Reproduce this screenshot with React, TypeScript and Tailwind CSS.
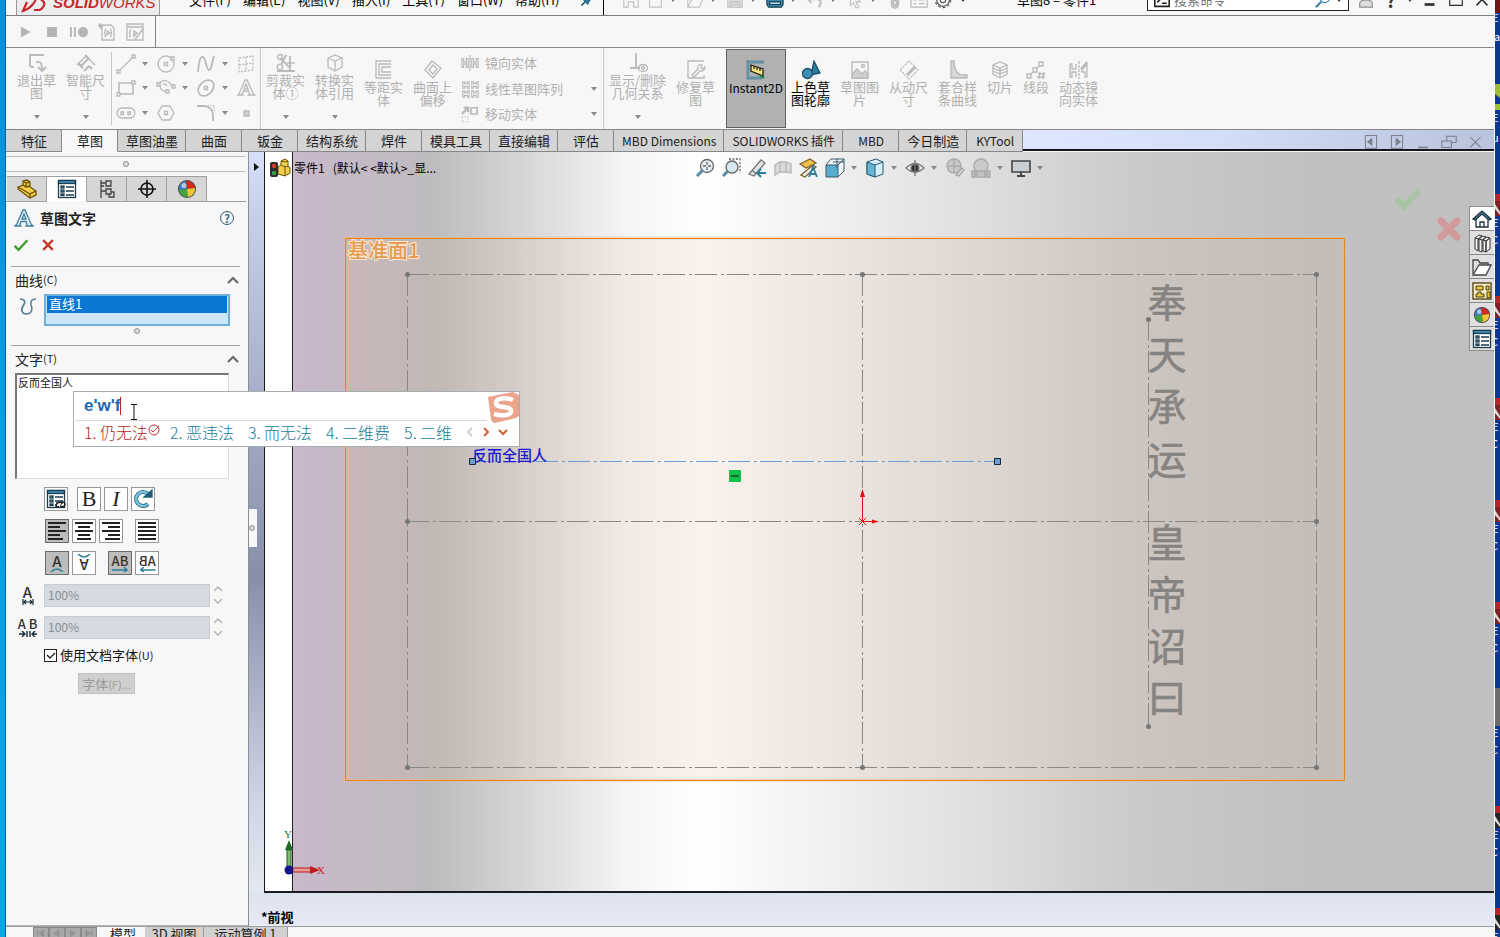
import React, { useState } from 'react'

type IconProps = { size?: string; stroke?: string; children: React.ReactNode }

const Icon: React.FC<IconProps> = ({ size = 'size-5', stroke = '#b9b9b9', children }) => (
  <svg viewBox="0 0 20 20" className={`${size} shrink-0`} fill="none" stroke={stroke} strokeWidth="1.3" aria-hidden="true">
    {children}
  </svg>
)

const Arrow: React.FC<{ className?: string }> = ({ className = 'text-[#8a8a8a]' }) => (
  <svg viewBox="0 0 6 4" className={`h-1 w-1.5 shrink-0 ${className}`} aria-hidden="true">
    <path d="M0 0h6L3 4z" fill="currentColor" />
  </svg>
)

const Chevron = () => (
  <svg viewBox="0 0 12 8" className="h-2 w-3" fill="none" stroke="#666" strokeWidth="2" aria-hidden="true">
    <path d="M1 7l5-5 5 5" />
  </svg>
)

const Dot = () => <span className="block size-1.5 rounded-full border border-[#909090] bg-[#dcdcdc]" />

const Sphere: React.FC<{ size?: string }> = ({ size = 'size-5' }) => (
  <Icon size={size} stroke="none">
    <circle cx="10" cy="10" r="9" fill="#444" />
    <path d="M10 10L9 2a8 8 0 0 0-7 9z" fill="#3f7fc4" />
    <path d="M10 10L9 2a8 8 0 0 1 9 7z" fill="#d42a1e" />
    <path d="M10 10L2 11a8 8 0 0 0 9 7z" fill="#45a33c" />
    <path d="M10 10l8-1a8 8 0 0 1-7 9z" fill="#f0c736" />
    <circle cx="7" cy="6.500" r="2.500" fill="#fff" opacity=".6" />
  </Icon>
)

const ListIcon: React.FC<{ size?: string; linked?: boolean }> = ({ size = 'size-5', linked }) => (
  <Icon size={size} stroke="#1d3d4f">
    <rect x="1.500" y="1.500" width="17" height="17" fill="#fff" />
    <rect x="1.500" y="1.500" width="17" height="3" fill="#3d8fb5" />
    <rect x="4" y="7" width="3" height="2" fill="#58b5d8" />
    <rect x="4" y="11" width="3" height="2" fill="#58b5d8" />
    <rect x="4" y="15" width="3" height="1.500" fill="#58b5d8" />
    <path d="M9 8h8M9 12h8M9 16h8" />
    {linked && <path d="M13 18l-3-1 1-3 4-1 1 2M14 17l4 1 1-3-1-2-3 1" fill="#fff" stroke="#222" strokeWidth="1.600" />}
  </Icon>
)

const PartIcon: React.FC<{ size?: string }> = ({ size = 'size-5' }) => (
  <Icon size={size} stroke="#6b5200">
    <path d="M1 8l5-2V2l4-1 3 2v5l6 4v4l-6 3L1 10z" fill="#f3cd4b" />
    <path d="M6 6l3 2 4-1M6 2l3 2 4-1M9 4v4M13 19v-4l6-3M13 15L1 8" />
  </Icon>
)

const icons = {
  exit: <><path d="M7 14H5a2 2 0 0 1-2-2V2h14" strokeWidth="1.800" /><path d="M9 9c5-1 6 1 6 9M11 14l4 4 4-4" strokeWidth="1.800" /></>,
  smart: <><path d="M1 12l9-9 9 9" /><path d="M4 14l9-9M8 18l5-5M2 10l5 5M9 2l4 4M13 13l3 3" strokeWidth="2.200" /></>,
  line: <><path d="M3 17L17 3" /><path d="M1 16h3v3H1zM16 1h3v3h-3z" fill="#f7f7f7" /></>,
  rect: <><path d="M3 5h14v11H3z" strokeWidth="1.600" /><path d="M1 15h3v3H1zM16 3h3v3h-3z" fill="#f7f7f7" /></>,
  slot: <><rect x="1" y="5" width="18" height="10" rx="5" /><path d="M5 9h2.500v2.500H5zM12 9h2.500v2.500H12z" /></>,
  circle: <><circle cx="10" cy="10" r="8" /><path d="M8.500 8.500h3v3h-3zM15 3h3v3h-3z" fill="#f7f7f7" /></>,
  arc: <><path d="M3 6c3-5 9-5 14 3M4 7c0 5 3 7 7 6M11 8a4 4 0 0 0-4-2" /><path d="M1 5h3v3H1zM16 7h3v3h-3zM10 12h3v3h-3z" fill="#f7f7f7" /></>,
  polygon: <><path d="M6 3h8l4 7-4 7H6l-4-7z" /><path d="M8.500 8.500h3v3h-3z" /></>,
  spline: <path d="M2 18C3 8 4 2 7 3c3 1 3 13 6 13 3 0 3-9 5-14" strokeWidth="1.800" />,
  ellipse: <><ellipse cx="10" cy="10" rx="9" ry="6.500" transform="rotate(-45 10 10)" strokeWidth="1.600" /><path d="M8.500 8.500h3v3h-3z" /></>,
  fillet: <><path d="M1 3h7a9 9 0 0 1 9 9v6" strokeWidth="1.800" /><path d="M12 3h6v5" strokeDasharray="1 1.500" /></>,
  plane: <path d="M3 4l14-2v14L3 18zM10 3v14M3 11l14-2" strokeDasharray="2 1.500" />,
  letter: <path d="M2 17h5l-1-1 1.500-3h5l1 3-1 1h6l-1-1L11 2H9L3 16zM8 11l2-5 2 5z" />,
  point: <path d="M8 8h5v5H8z" fill="#cfcfcf" />,
  trim: <><path d="M4 5l9 9M10 2L5 12M1 18h18M14 3v15" strokeWidth="1.800" /><circle cx="4" cy="14" r="2.800" /><circle cx="4" cy="4" r="2.500" /><path d="M11 10h8" /></>,
  convert: <path d="M3 5l7-3 7 3v9l-7 4-7-4zM3 5l7 3 7-3M10 8v10" />,
  offset: <><path d="M17 1H2v17h15M17 4H5v11h12" /><path d="M17 7H8v5h9" /></>,
  surface: <path d="M9 1l9 7-8 10-8-8zM10 5l4 4-4 5-4-4z" />,
  mirror: <><path d="M10 1v18" /><path d="M1 5h2v4h3V5h2v10H6v-4H3v4H1zM12 5h2v4h3V5h2v10h-2v-4h-3v4h-2z" /></>,
  pattern: <path d="M2 2h2v2h3V2h2v7H7V7H4v2H2zM12 2h2v2h3V2h2v7h-2V7h-3v2h-2zM2 12h2v2h3v-2h2v7H7v-2H4v2H2zM12 12h2v2h3v-2h2v7h-2v-2h-3v2h-2z" />,
  move: <><path d="M11 3h7v7h-7z" strokeWidth="1.800" /><path d="M1 10l6-6M3 3h5v5" strokeWidth="2.500" /><path d="M1 13h7v6H1z" strokeDasharray="1 2" /></>,
  relation: <><path d="M8 0v14M2 15h10" strokeWidth="1.800" /><ellipse cx="15" cy="15" rx="4.500" ry="3.500" /><circle cx="15" cy="15" r="1.500" /></>,
  repair: <><path d="M18 1H2v17h16v-3" /><path d="M6 15l6-6a3 3 0 0 1 4-4l-1 3 2 1 2-2a4 4 0 0 1-5 4l-6 6z" /></>,
  picture: <><path d="M2 2h16v16H2z" /><path d="M2 14l5-5 5 5 3-3 3 3v4H2z" fill="#d0d0d0" /><circle cx="13" cy="6" r="1.500" /></>,
  driven: <><path d="M10 1l9 9-9 9-9-9z" strokeDasharray="2 1" /><path d="M8 15l8-8" strokeWidth="3" /></>,
  fit: <path d="M3 1v17h16v-3h-3C9 15 6 9 6 1z" fill="#d6d6d6" />,
  slice: <path d="M3 5l7-3 7 3v9l-7 4-7-4zM3 5l7 3 7-3M3 8l7 3 7-3M3 11l7 3 7-3M10 8v10" />,
  segment: <><path d="M1 14h4v4H1zM7 8h4v4H7zM13 2h4v4h-4zM5 14l2-2M11 8l2-2" /><path d="M14 12l-1 7M18 12l-1 7M12 14h7M11 17h8" /></>,
  dynMirror: <><path d="M10 1v18" strokeDasharray="3 1" /><path d="M1 4h2v5h4V4M1 4v13h2v-5h4v5M13 10l5-6v13h-2v-5h-3z" /><path d="M12 9l6-7" strokeWidth="2" /></>,
}

type Tool = { lines: string[]; icon: keyof typeof icons; arrow?: boolean; width?: string }

const RibbonTool: React.FC<{ tool: Tool }> = ({ tool }) => (
  <button
    type="button"
    disabled
    className={`flex shrink-0 flex-col items-center text-[13px] leading-[13px] text-[#b0b0b0] ${tool.width || 'w-[49px]'} ${tool.arrow ? 'pt-[5px]' : 'pt-3'}`}
  >
    <Icon>{icons[tool.icon]}</Icon>
    <span className="whitespace-nowrap">
      {tool.lines.map((line) => <span key={line} className="block">{line}</span>)}
    </span>
    {tool.arrow && <Arrow className="mt-auto mb-2.5 text-[#8a8a8a]" />}
  </button>
)

const startTools: Tool[] = [
  { lines: ['退出草', '图'], icon: 'exit', arrow: true },
  { lines: ['智能尺', '寸'], icon: 'smart', arrow: true },
]
const editTools: Tool[] = [
  { lines: ['剪裁实', '体①'], icon: 'trim', arrow: true },
  { lines: ['转换实', '体引用'], icon: 'convert', arrow: true },
  { lines: ['等距实', '体'], icon: 'offset' },
  { lines: ['曲面上', '偏移'], icon: 'surface' },
]
const relationTools: Tool[] = [
  { lines: ['显示/删除', '几何关系'], icon: 'relation', arrow: true, width: 'w-[67px]' },
  { lines: ['修复草', '图'], icon: 'repair' },
]
const moreTools: Tool[] = [
  { lines: ['草图图', '片'], icon: 'picture' },
  { lines: ['从动尺', '寸'], icon: 'driven' },
  { lines: ['套合样', '条曲线'], icon: 'fit' },
  { lines: ['切片'], icon: 'slice', width: 'w-9' },
  { lines: ['线段'], icon: 'segment', width: 'w-9' },
  { lines: ['动态镜', '向实体'], icon: 'dynMirror' },
]
const sketchGrid: { icon: keyof typeof icons; arrow: boolean; label: string }[] = [
  { icon: 'line', arrow: true, label: '直线' },
  { icon: 'circle', arrow: true, label: '圆' },
  { icon: 'spline', arrow: true, label: '样条曲线' },
  { icon: 'plane', arrow: false, label: '基准面' },
  { icon: 'rect', arrow: true, label: '矩形' },
  { icon: 'arc', arrow: true, label: '圆弧' },
  { icon: 'ellipse', arrow: true, label: '椭圆' },
  { icon: 'letter', arrow: false, label: '文字' },
  { icon: 'slot', arrow: true, label: '槽口' },
  { icon: 'polygon', arrow: false, label: '多边形' },
  { icon: 'fillet', arrow: true, label: '圆角' },
  { icon: 'point', arrow: false, label: '点' },
]
const rowTools: { icon: keyof typeof icons; label: string; arrow: boolean }[] = [
  { icon: 'mirror', label: '镜向实体', arrow: false },
  { icon: 'pattern', label: '线性草图阵列', arrow: true },
  { icon: 'move', label: '移动实体', arrow: true },
]

const menus = ['文件(F)', '编辑(E)', '视图(V)', '插入(I)', '工具(T)', '窗口(W)', '帮助(H)']

const quickTools = [
  { label: '主页', arrow: false, art: <path d="M2 9l8-7 8 7v9h-5v-6H7v6H2z" /> },
  { label: '新建', arrow: true, art: <path d="M4 2h9l4 4v12H4z" /> },
  { label: '打开', arrow: true, art: <path d="M2 18V4h6l2 2h8v2M2 18L7 8h12l-4 10z" /> },
  { label: '保存', arrow: true, art: <><path d="M2 2h14l2 2v14H2z" fill="#ddd" /><path d="M5 18v-6h10v6M6 15h8" /></> },
  { label: '打印', arrow: true, art: <g stroke="#163f52"><path d="M5 9V2h10v7" fill="#fff" /><path d="M1 9h18v6l-2 3H3l-2-3z" fill="#3d88a8" /><path d="M4 12h12v3H4z" fill="#bfe4f2" /></g> },
  { label: '撤销', arrow: true, art: <path d="M2 9h11c4 0 4 6 1 9M6 4L2 9l4 4" strokeWidth="2.500" /> },
  { label: '选择', arrow: true, art: <path d="M5 1l11 11H11l3 6-3 1-3-6-3 3z" /> },
]

const TitleBar = () => (
  <header className="h-4 shrink-0 overflow-hidden border-b border-[#7b7d7f]">
    <div className="-mt-4 flex h-8 items-center text-[13px] text-black">
      <div className="flex h-full w-[598px] shrink-0 items-center border-r border-b border-black pl-2.5">
        <div className="flex h-full w-36 shrink-0 items-center gap-1 border-x border-[#9a9a9a] bg-[#ececec] pt-1.5 pl-1 text-[#c5282c]">
          <svg viewBox="0 0 28 20" className="h-5 w-7 shrink-0" fill="none" stroke="#c5282c" strokeWidth="2.200" aria-hidden="true">
            <path d="M6 3h6c4 0 3 5 0 8-3 4-7 6-10 7l4-9M26 2h-4c-4 1-3 4 0 6 3 3 0 8-4 9h-5" />
          </svg>
          <span className="text-[15px] leading-5 italic [font-family:'Liberation_Sans',sans-serif]">
            <b>SOLID</b>WORKS
          </span>
        </div>
        <nav className="flex flex-1 items-center gap-3 pr-2 pl-[29px]">
          {menus.map((item) => (
            <button key={item} type="button" className="whitespace-nowrap">{item}</button>
          ))}
          <Icon size="ml-auto size-4" stroke="#22607c">
            <path d="M3 17l5-5" strokeWidth="2" />
            <path d="M5 9l6 6 2-4 5-5-4-4-5 5z" fill="#2c7ea1" />
          </Icon>
        </nav>
      </div>
      <div className="flex shrink-0 items-center gap-1.5 pl-[18px]">
        {quickTools.map((t) => (
          <button key={t.label} type="button" aria-label={t.label} className="flex items-center gap-1.5">
            <Icon size="size-[18px]" stroke="#c2c2c2">{t.art}</Icon>
            {t.arrow && <Arrow className="mr-1 text-[#777]" />}
          </button>
        ))}
        <button type="button" aria-label="重建模型">
          <Icon size="size-[18px]"><rect x="6" y="0" width="8" height="19" rx="4" fill="#c4c4c4" /><circle cx="10" cy="13" r="2" fill="#eee" /></Icon>
        </button>
        <button type="button" aria-label="文件属性">
          <Icon size="size-[18px]"><path d="M1 2h18v16H1zM1 6h18M4 10h3M4 14h3M10 10h6M10 14h6" /></Icon>
        </button>
        <button type="button" aria-label="选项" className="flex items-center gap-2">
          <Icon size="size-[18px]" stroke="#555"><circle cx="10" cy="10" r="8.500" strokeDasharray="3 2.300" /><circle cx="10" cy="10" r="7" /><circle cx="10" cy="10" r="3" /></Icon>
          <Arrow className="text-[#333]" />
        </button>
      </div>
      <div className="flex-1 text-center">草图8 – 零件1</div>
      <label className="flex h-[22px] w-[202px] shrink-0 items-center border border-[#222] bg-white px-1.5">
        <Icon size="size-4" stroke="#222"><path d="M1 1h18v17H1z" strokeWidth="2" /><path d="M4 6l4 3-4 4M10 14h6" strokeWidth="2" /></Icon>
        <input aria-label="搜索命令" placeholder="搜索命令" className="ml-1 w-full min-w-0 bg-transparent placeholder:text-[#777] focus:outline-none" />
        <Icon size="size-[18px]" stroke="#3f85ad"><circle cx="12" cy="8" r="5" /><path d="M8 12l-6 6" strokeWidth="2.500" /></Icon>
        <Arrow className="ml-1 text-[#333]" />
      </label>
      <div className="flex shrink-0 items-center gap-2 pr-[3px] pl-2 text-[#333]">
        <Icon size="size-[18px]" stroke="#8d8d8d"><circle cx="10" cy="5" r="4" /><path d="M3 18v-4q0-4 7-4t7 4v4z" fill="#ddd" /></Icon>
        <button type="button" className="w-4 text-lg font-bold" aria-label="帮助">?</button>
        <Arrow className="text-[#444]" />
        <button type="button" aria-label="最小化"><Icon size="size-[18px]" stroke="#333"><path d="M4 15h11" strokeWidth="3" /></Icon></button>
        <button type="button" aria-label="最大化"><Icon size="size-[18px]" stroke="#333"><path d="M3 4h14v12H3z" /></Icon></button>
        <button type="button" aria-label="关闭"><Icon size="size-[18px]" stroke="#333"><path d="M4 3l12 13M16 3L4 16" strokeWidth="1.800" /></Icon></button>
      </div>
    </div>
  </header>
)

const MacroBar = () => (
  <div className="flex h-8 shrink-0 border-b border-[#85878a]">
    <div className="flex w-[150px] items-center gap-2 border-r border-[#85878a] pl-[11px]">
      <button type="button" aria-label="运行宏"><Icon size="size-[18px]"><path d="M5 5l9 5-9 5z" fill="#b5b5b5" /></Icon></button>
      <button type="button" aria-label="停止宏"><Icon size="size-[18px]"><path d="M5 5h10v10H5z" fill="#b5b5b5" /></Icon></button>
      <button type="button" aria-label="录制宏"><Icon size="size-[20px]"><path d="M2 5v10M6 5v10" strokeWidth="2" /><circle cx="14" cy="10" r="4.500" fill="#b5b5b5" /></Icon></button>
      <button type="button" aria-label="新建宏"><Icon><path d="M5 3h9l3 3v12H5zM9 7c-2 0 0 4-2 4 2 0 0 4 2 4M13 7c2 0 0 4 2 4-2 0 0 4-2 4M10 9l3 2-3 2z" /><path d="M1 4h5M3.500 1v6M2 2l3 4" /></Icon></button>
      <button type="button" aria-label="编辑宏"><Icon><path d="M2 2h16v16H2zM2 5h16" /><path d="M6 8c-2 0 0 3-2 3 2 0 0 4 2 4M9 9l3 2-3 3zM18 7l-6 8-2 2" strokeWidth="1.500" /></Icon></button>
    </div>
  </div>
)

const Ribbon = () => (
  <div className="flex h-[82px] shrink-0 border-b border-[#85878a] pl-1.5">
    <div className="flex pr-px">{startTools.map((t) => <RibbonTool key={t.icon} tool={t} />)}</div>
    <div className="my-1 grid grid-cols-[40px_40px_40px_24px] grid-rows-3 border-l border-[#c6c6c6] pl-1">
      {sketchGrid.map((t) => (
        <button key={t.icon} type="button" disabled aria-label={t.label} className="flex items-center gap-1.5">
          <Icon>{icons[t.icon]}</Icon>
          {t.arrow && <Arrow />}
        </button>
      ))}
    </div>
    <div className="flex border-l border-[#c6c6c6]">{editTools.map((t) => <RibbonTool key={t.icon} tool={t} />)}</div>
    <div className="flex w-[146px] flex-col py-0.5 pl-1 text-[13px] text-[#b0b0b0]">
      {rowTools.map((t) => (
        <button key={t.icon} type="button" disabled className="flex flex-1 items-center gap-1.5 pr-1.5">
          <Icon size="size-[18px]">{icons[t.icon]}</Icon>
          <span>{t.label}</span>
          {t.arrow && <Arrow className="ml-auto text-[#8a8a8a]" />}
        </button>
      ))}
    </div>
    <div className="flex w-[123px] border-l border-[#c6c6c6]">{relationTools.map((t) => <RibbonTool key={t.icon} tool={t} />)}</div>
    <button type="button" className="my-px flex w-[60px] shrink-0 flex-col items-center border border-[#5f5f5f] bg-[#b1b1b1] pt-2.5 text-xs leading-[15px] text-black">
      <Icon stroke="#1d5f7c">
        <path d="M18 2H2v16h14" strokeWidth="2.400" />
        <path d="M18 2H2v16h14" stroke="#bfe4f2" strokeWidth=".8" />
        <path d="M5 5l12 4v7L5 11z" fill="#f7e37a" stroke="#222" />
        <path d="M8 6v3M11 7v3M14 8v3" stroke="#222" />
        <path d="M14 15l4 3" stroke="#1d7a3a" strokeWidth="2" />
      </Icon>
      Instant2D
    </button>
    <button type="button" className="flex w-[49px] shrink-0 flex-col items-center pt-3 text-[13px] leading-[13px] text-black">
      <Icon stroke="#1d4f6c">
        <path d="M13 1l6 12-9 2z" fill="#2c7ea1" />
        <circle cx="6.500" cy="13.500" r="5" fill="#3d8fb5" />
      </Icon>
      <span className="whitespace-nowrap">上色草</span>
      <span className="whitespace-nowrap">图轮廓</span>
    </button>
    {moreTools.map((t) => <RibbonTool key={t.icon} tool={t} />)}
  </div>
)

const tabs = [
  { name: '特征' },
  { name: '草图' },
  { name: '草图油墨' },
  { name: '曲面' },
  { name: '钣金' },
  { name: '结构系统' },
  { name: '焊件' },
  { name: '模具工具' },
  { name: '直接编辑' },
  { name: '评估' },
  { name: 'MBD Dimensions', latin: true },
  { name: 'SOLIDWORKS 插件', latin: true },
  { name: 'MBD', latin: true },
  { name: '今日制造' },
  { name: 'KYTool', latin: true },
]

const CommandTabs: React.FC<{ active: string; onSelect: (tab: string) => void }> = ({ active, onSelect }) => (
  <div className="flex h-[22px] shrink-0 text-[#1c1c1c]">
    {tabs.map((tab) => (
      <button
        key={tab.name}
        type="button"
        onClick={() => onSelect(tab.name)}
        className={`min-w-14 shrink-0 border-r border-b border-[#85878a] pr-[7px] pl-2 whitespace-nowrap ${tab.latin ? 'text-xs leading-5' : 'text-[13px] leading-5'} ${tab.name === active ? 'border-b-[#f7f7f7] bg-[#f7f7f7]' : 'bg-[#d4d4d4]'}`}
      >
        {tab.name}
      </button>
    ))}
    <div className="flex h-[21px] flex-1 items-end justify-end gap-2.5 border-b-2 border-[#15161c] bg-[linear-gradient(to_right,#dfe7ff,#d3def7_40%,#b9c4dc)] pr-[11px]">
      <button type="button" aria-label="左窗格"><Icon size="size-4" stroke="#7a7f8a"><path d="M3 3h14v16H3z" /><path d="M11 7v8l-5-4z" fill="#7a7f8a" /></Icon></button>
      <button type="button" aria-label="右窗格"><Icon size="size-4" stroke="#7a7f8a"><path d="M3 3h14v16H3z" /><path d="M9 7v8l5-4z" fill="#7a7f8a" /></Icon></button>
      <button type="button" aria-label="最小化文档"><Icon size="size-4" stroke="#7a7f8a"><path d="M4 18h12" strokeWidth="2" /></Icon></button>
      <button type="button" aria-label="还原文档"><Icon size="size-4" stroke="#7a7f8a"><path d="M1 10h12v8H1zM7 10V4h12v8h-6" /></Icon></button>
      <button type="button" aria-label="关闭文档"><Icon size="size-4" stroke="#7a7f8a"><path d="M4 5l13 13M17 5L4 18" /></Icon></button>
    </div>
  </div>
)

const FormatButton: React.FC<{ label: string; on?: boolean; gap?: boolean; children: React.ReactNode }> = ({ label, on, gap, children }) => (
  <button
    type="button"
    aria-label={label}
    aria-pressed={!!on}
    className={`flex size-6 items-center justify-center border ${on ? 'border-[#6c6c6c] bg-[#bdbdbd]' : 'border-[#979797] bg-white'} ${gap ? 'ml-[9px]' : ''}`}
  >
    {children}
  </button>
)

const panelTabs = [
  { label: '特征树', art: <PartIcon /> },
  { label: '属性', art: <ListIcon /> },
  { label: '配置', art: <Icon stroke="#444"><path d="M4 1v18M4 4h5M4 12h5M9 2h5v5H9zM9 10h5v5H9zM14 13h3v5h-5v-3M4 7h3" /></Icon> },
  { label: '尺寸', art: <Icon stroke="#111"><circle cx="10" cy="10" r="6" strokeWidth="1.600" /><path d="M10 1v18M1 10h18" strokeWidth="1.600" /></Icon> },
  { label: '外观', art: <Sphere /> },
]

const GroupTitle: React.FC<{ name: string; hint: string }> = ({ name, hint }) => (
  <button type="button" className="flex h-7 w-full items-center border-t border-[#a4a4a4] pr-px pb-0.5 pl-1 text-sm text-[#222]">
    {name}<span className="text-[11px]">{hint}</span>
    <span className="ml-auto"><Chevron /></span>
  </button>
)

const Spinner: React.FC<{ label: string; children: React.ReactNode }> = ({ label, children }) => (
  <div className="flex h-8 items-center">
    <span className="flex w-[33px] shrink-0 justify-center">{children}</span>
    <input
      aria-label={label}
      disabled
      defaultValue="100%"
      className="h-[23px] w-[166px] border border-[#c9ccd0] bg-[#d5d9e0] px-[3px] pb-0.5 text-xs text-[#8a8d92]"
    />
    <svg viewBox="0 0 10 20" className="ml-[3px] h-5 w-2.5" fill="none" stroke="#b5b5b5" strokeWidth="1.500" aria-hidden="true">
      <path d="M1 6l4-4 4 4M1 14l4 4 4-4" />
    </svg>
  </div>
)

const PropertyPanel = () => {
  const [text, setText] = useState('反而全国人')
  const [docFont, setDocFont] = useState(true)

  return (
    <aside className="flex w-[243px] shrink-0 flex-col border-r border-[#8b8f96] pt-1">
      <div className="mr-0.5 flex h-4 shrink-0 items-center justify-center border-y border-[#bcbcbc]"><Dot /></div>
      <div className="mt-1 mr-0.5 flex h-[26px] shrink-0 border-b border-[#a0a0a0] pl-px">
        {panelTabs.map((t, i) => (
          <button
            key={t.label}
            type="button"
            aria-label={t.label}
            className={`flex h-[26px] w-10 items-center justify-center border border-l-0 border-[#a0a0a0] ${i === 1 ? 'border-b-[#f7f7f7] bg-white' : 'bg-[#d6d6d6]'}`}
          >
            {t.art}
          </button>
        ))}
      </div>
      <div className="flex h-8 shrink-0 items-center pr-3.5 pl-2">
        <Icon stroke="#3d7d9c"><path d="M1 18h6l-1-1.500 1-3h5l1 3-1 1.500h7l-2-2L11 2H9L3 16zM8 11l2-5 2 5z" fill="#eaf5fa" /></Icon>
        <h2 className="ml-1.5 text-sm font-bold text-[#222]">草图文字</h2>
        <button type="button" aria-label="帮助" className="ml-auto flex size-3.5 items-center justify-center rounded-full border border-[#33536b] text-[11px] leading-none font-bold text-[#2b6c93]">?</button>
      </div>
      <div className="flex h-8 shrink-0 items-start gap-[11px] pt-[3px] pl-[7px]">
        <button type="button" aria-label="确定"><Icon size="size-4" stroke="#3f9a32"><path d="M2 11l5 5L18 4" strokeWidth="3" /></Icon></button>
        <button type="button" aria-label="取消"><Icon size="size-4" stroke="#c0392b"><path d="M4 4l12 12M16 4L4 16" strokeWidth="3" /></Icon></button>
      </div>

      <div className="mr-2 ml-[5px] flex flex-col">
        <GroupTitle name="曲线" hint="(C)" />
        <div className="flex items-start">
          <div className="flex w-[33px] shrink-0 justify-center pt-0.5">
            <Icon stroke="#4f7f96"><path d="M2 3c5 0 6 3 3 7-3 5 0 8 3 8 6 0 7-5 5-9-1-4 1-6 5-6" strokeWidth="1.600" /></Icon>
          </div>
          <ul aria-label="曲线" className="h-8 w-[186px] border-2 border-[#6fb0d8] bg-[#cce5f9]">
            <li className="mx-px h-[17px] bg-[#0a78d2] pl-0.5 text-[13px] leading-4 text-white">直线1</li>
          </ul>
        </div>
        <div className="flex h-[19px] items-start justify-center pt-0.5 pl-[22px]"><Dot /></div>
        <GroupTitle name="文字" hint="(T)" />
        <textarea
          aria-label="文字"
          value={text}
          onChange={(e) => setText(e.target.value)}
          className="ml-1 h-[106px] w-[214px] resize-none border border-t-2 border-l-2 border-[#dcdcdc] border-t-[#777] border-l-[#777] bg-white px-px text-[11px] leading-[15px] text-[#222] focus:outline-none"
        />

        <div className="ml-[33px] flex h-8 items-center gap-[3px] pt-2">
          <FormatButton label="链接到属性"><ListIcon linked /></FormatButton>
          <span className="w-[3px]" />
          <FormatButton label="加粗"><span className="text-[22px] leading-5 text-[#222] [font-family:'Liberation_Serif',serif]">B</span></FormatButton>
          <FormatButton label="斜体"><span className="text-[22px] leading-5 text-[#222] italic [font-family:'Liberation_Serif',serif]">I</span></FormatButton>
          <FormatButton label="旋转">
            <Icon stroke="#235e78"><path d="M15 15a7 7 0 1 1 0-10" strokeWidth="4" /><path d="M15 15a7 7 0 1 1 0-10" stroke="#7cc3dc" strokeWidth="2.400" /><path d="M11 8h8V1z" fill="#235e78" /></Icon>
          </FormatButton>
        </div>
        <div className="ml-[34px] flex h-8 items-center gap-[3px] pt-2">
          <FormatButton label="左对齐" on><Icon stroke="#222"><path d="M1 2h18M1 6h12M1 10h18M1 14h12M1 18h15" strokeWidth="2" /></Icon></FormatButton>
          <FormatButton label="居中"><Icon stroke="#222"><path d="M1 2h18M4 6h12M1 10h18M4 14h12M3 18h14" strokeWidth="2" /></Icon></FormatButton>
          <FormatButton label="右对齐"><Icon stroke="#222"><path d="M1 2h18M7 6h12M1 10h18M7 14h12M4 18h15" strokeWidth="2" /></Icon></FormatButton>
          <FormatButton label="两端对齐" gap><Icon stroke="#222"><path d="M1 2h18M1 6h18M1 10h18M1 14h18M1 18h18" strokeWidth="2" /></Icon></FormatButton>
        </div>
        <div className="ml-[34px] flex h-8 items-center gap-[3px] pt-2">
          <FormatButton label="竖直正向" on>
            <span className="flex flex-col items-center text-[15px] leading-[13px] font-medium text-[#333]">A
              <svg viewBox="0 0 14 5" className="h-[5px] w-3.5" fill="none" stroke="#2d7f9f" strokeWidth="1.600"><path d="M1 5q6-6 12 0" /></svg>
            </span>
          </FormatButton>
          <FormatButton label="竖直反转">
            <span className="flex rotate-180 flex-col items-center text-[15px] leading-[13px] font-medium text-[#333]">A
              <svg viewBox="0 0 14 5" className="h-[5px] w-3.5" fill="none" stroke="#2d7f9f" strokeWidth="1.600"><path d="M1 5q6-6 12 0" /></svg>
            </span>
          </FormatButton>
          <FormatButton label="水平正向" on gap>
            <span className="flex flex-col items-center text-[13px] leading-[13px] font-medium text-[#333]">AB
              <svg viewBox="0 0 16 5" className="h-[5px] w-4" fill="none" stroke="#2d7f9f" strokeWidth="1.500"><path d="M0 3h15M12 0l3 3-3 2" /></svg>
            </span>
          </FormatButton>
          <FormatButton label="水平反转">
            <span className="flex -scale-x-100 flex-col items-center text-[13px] leading-[13px] font-medium text-[#333]">AB
              <svg viewBox="0 0 16 5" className="h-[5px] w-4" fill="none" stroke="#2d7f9f" strokeWidth="1.500"><path d="M0 3h15M12 0l3 3-3 2" /></svg>
            </span>
          </FormatButton>
        </div>

        <div className="pt-1">
          <Spinner label="宽度因子">
            <span className="flex flex-col items-center text-[15px] leading-[14px] font-medium text-[#333]">A
              <svg viewBox="0 0 12 6" className="h-1.5 w-3" fill="none" stroke="#17303c" strokeWidth="1.200"><path d="M1 0v6M11 0v6M1 3h10M4 1L2 3l2 2M8 1l2 2-2 2" /></svg>
            </span>
          </Spinner>
          <Spinner label="间距">
            <span className="flex flex-col items-center text-[13px] leading-[14px] font-medium whitespace-nowrap text-[#333]">A B
              <svg viewBox="0 0 18 6" className="h-1.5 w-[18px]" fill="none" stroke="#17303c" strokeWidth="1.400"><path d="M0 3h6M3 0l3 3-3 3M8 0v6M11 0v6M18 3h-5M16 0l-3 3 3 3" /></svg>
            </span>
          </Spinner>
        </div>
        <label className="ml-[33px] flex h-6 items-center gap-[3px] text-[13px] text-[#111]">
          <span className="relative flex size-[13px]">
            <input type="checkbox" checked={docFont} onChange={(e) => setDocFont(e.target.checked)} className="size-[13px] appearance-none border border-[#222] bg-white" />
            {docFont && (
              <svg viewBox="0 0 13 13" className="pointer-events-none absolute inset-0" fill="none" stroke="#222" strokeWidth="1.400"><path d="M3 6l3 3 5-5" /></svg>
            )}
          </span>
          <span>使用文档字体<span className="text-[11px]">(U)</span></span>
        </label>
        <button type="button" disabled className="mt-1.5 ml-[67px] h-[21px] w-[57px] border border-[#c2c2c2] bg-[#cfcfcf] text-[13px] leading-[19px] text-[#9a9a9a]">
          字体<span className="text-[11px]">(F)...</span>
        </button>
      </div>
      <div className="mt-auto h-px bg-[#b5b5b5]" />
    </aside>
  )
}

const hud: { label: string; arrow?: boolean; art: React.ReactNode }[] = [
  { label: '整屏显示', art: <g stroke="#666"><circle cx="12" cy="8" r="6.500" fill="#e6eef2" /><path d="M8 12l-6 6" strokeWidth="3" stroke="#5b8ba3" /><path d="M12 4v3M12 9v3M8 8h3M13 8h3" /></g> },
  { label: '局部放大', art: <g stroke="#666"><path d="M8 1h11v14" strokeDasharray="2 1.500" /><circle cx="11" cy="9" r="6" fill="#d9e8ef" /><path d="M7 13l-5 5" strokeWidth="3" stroke="#5b8ba3" /></g> },
  { label: '上一视图', art: <g stroke="#777"><path d="M2 16L14 2l4 3L7 18z" fill="#e4e4e4" /><path d="M5 12l4 4" /><path d="M19 15h-8M14 11l-4 4 4 4" stroke="#2c7ea1" strokeWidth="2" /></g> },
  { label: '剖面视图', art: <g stroke="#b5b5b5"><path d="M2 7l5-3v10l-5 3zM7 4h6v10H7M13 4l5 2v9l-5-1" fill="#dadada" /></g> },
  { label: '动态注解视图', art: <g stroke="#7a6428"><path d="M1 6l10-5 6 4-10 5z" fill="#f0bf4c" /><path d="M2 17L14 7l3 2L6 19z" fill="#eee" /><path d="M10 19l4-10 4 10M11 16h6" stroke="#2c7ea1" strokeWidth="1.800" /></g> },
  { label: '视图定向', arrow: true, art: <g stroke="#3b5a68" strokeWidth="1"><path d="M6 1h13v12l-6 6" fill="#eef6fa" /><path d="M1 7h12v12H1z" fill="#5aacd0" /><path d="M1 7l5-6M13 7l6-6M13 19l6-6M12 1v9M8 4h11" /></g> },
  { label: '显示样式', arrow: true, art: <g stroke="#245873" strokeWidth="1"><path d="M2 4l9-3 7 3v12l-8 3-8-3z" fill="#d5edf7" /><path d="M2 4l8 3v12l-8-3z" fill="#69b4d3" /><path d="M10 7l8-3" /></g> },
  { label: '隐藏显示项目', arrow: true, art: <g stroke="#777"><path d="M1 10q9-9 18 0-9 8-18 0z" fill="#eee" /><circle cx="10" cy="10" r="4" fill="#333" /><path d="M10 2v16" /></g> },
  { label: '编辑外观', art: <g stroke="#aaa"><circle cx="9" cy="8" r="7" fill="#c9c9c9" /><path d="M9 1v14M2 8h14M11 17l6-7 2 2-5 6z" fill="#d6d6d6" /></g> },
  { label: '应用布景', arrow: true, art: <g stroke="#a9a9a9"><circle cx="10" cy="8" r="7" fill="#cacaca" /><path d="M1 19v-6h18v6z" fill="#c2c2c2" /><circle cx="5" cy="16" r="1.500" /><circle cx="15" cy="16" r="1.500" /></g> },
  { label: '视图设定', arrow: true, art: <g stroke="#444"><path d="M1 3h18v11H1z" fill="#c9cfd2" strokeWidth="1.600" /><path d="M10 14v4M6 18h8" strokeWidth="2" /></g> },
]

const taskPane = [
  { label: '资源', art: <Icon stroke="#1d2f38"><path d="M4 10v8h12v-8" fill="#fff" /><path d="M1 10l9-8 9 8-2 1-7-6-7 6z" fill="#3d8fa8" /><path d="M8 18v-5h4v5" /></Icon> },
  { label: '设计库', art: <Icon stroke="#333"><path d="M3 5l3 1v12l-3-2zM7 6l3 1v12l-3-1zM11 7l3 1v11l-3-1zM14 8l4-3v11l-4 3zM3 5l4-3 3 1-4 3M7 6l4-3 3 1-4 3M11 7l4-3 3 1-4 3" fill="#f2f2f2" strokeWidth="1" /></Icon> },
  { label: '文件探索器', art: <Icon stroke="#444"><path d="M1 17V3h5l2 3h8v3" fill="#ddd" /><path d="M1 18L7 8h12l-5 10z" fill="#fff" /></Icon> },
  { label: '视图调色板', art: <Icon stroke="#4a3c10"><rect x="1" y="2" width="18" height="16" fill="#f6eec5" /><path d="M4 5h7v4H4zM14 5h3v4h-3zM6 11h3v2h3v3H4v-3h2zM15 11h3v6h-3z" fill="#e8c643" strokeWidth="1" /></Icon> },
  { label: '外观布景', art: <Sphere size="size-[18px]" /> },
  { label: '自定义属性', art: <ListIcon /> },
]

const verse: [string, number][] = [['奉', 303], ['天', 355], ['承', 407], ['运', 460], ['皇', 543], ['帝', 595], ['诏', 647], ['曰', 698]]
const nodes = [[407, 274], [862, 274], [1316, 274], [407, 521], [1316, 521], [407, 767], [862, 767], [1316, 767], [1148, 319], [1148, 726]]

const SketchCanvas = () => (
  <svg viewBox="265 152 1229 739" className="absolute inset-0 size-full">
    <rect x="345" y="238" width="999" height="542" fill="#dfa882" fillOpacity=".15" stroke="#f0ba80" strokeOpacity=".5" strokeWidth="3" />
    <path d="M345.500 238.500h999v542h-999z" fill="none" stroke="#e58222" />
    <text x="348" y="258" fontSize="20" fontWeight="500" fill="#e59a50" stroke="#fbe9d4" strokeWidth="2" paintOrder="stroke">基准面1</text>
    <g fill="none" stroke="#8a8886" strokeDasharray="22 4 3 3">
      <path d="M407 274.500H1316M407 521.500H1316M407 767.500H1316M407.500 274V767M862.500 274V767M1316.500 274V767M1148.500 319V726" />
    </g>
    <path d="M472 461.500H997" stroke="#6d9fd3" strokeDasharray="22 4 3 3" />
    {nodes.map(([x, y]) => <circle key={`${x}-${y}`} cx={x + 0.5} cy={y + 0.5} r="2.500" fill="#777" />)}
    <g fontSize="39" fontWeight="400" fill="#868482" stroke="#868482" strokeWidth=".6" textAnchor="middle">
      {verse.map(([char, y]) => <text key={char} x="1167" y={y + 14}>{char}</text>)}
    </g>
    <text x="472" y="461" fontSize="15" fontWeight="500" fill="#1a1ad0">反而全国人</text>
    <path d="M469.500 458.500h6v6h-6zM994.500 458.500h6v6h-6z" fill="#6d9fd3" stroke="#15233a" />
    <rect x="729" y="470" width="12" height="12" fill="#12c24a" />
    <path d="M731 476h8" stroke="#0a4a1e" strokeWidth="1.500" />
    <g stroke="#e01010" fill="#e01010">
      <path d="M862.500 521V494M862 521.500H874M859 518l7 7M866 518l-7 7" fill="none" />
      <path d="M862.500 489l2.500 8h-5zM879 521.500l-7 2v-4z" stroke="none" />
    </g>
    {/* origin triad */}
    <path d="M287 869V850h4v19z" fill="#7dbd76" stroke="#1f5c22" />
    <path d="M289 840l4 10h-8z" fill="#1f6b26" />
    <path d="M290 868h21v4h-21z" fill="#ee9a94" stroke="#b01c1c" />
    <path d="M320 870l-10 4v-8z" fill="#c01c1c" />
    <circle cx="289" cy="870" r="4.500" fill="#16168c" />
    <g fontSize="11" className="[font-family:'Liberation_Serif',serif]">
      <text x="284" y="838" fill="#1f7a2a">Y</text>
      <text x="317" y="874" fill="#d62222">X</text>
    </g>
  </svg>
)

const Viewport = () => (
  <section className="relative flex min-w-0 flex-1 flex-col bg-[linear-gradient(to_bottom,#d5e0fa,#c5d0ea_8%,#939db8_45%,#8790ab_55%,#cfd5e5_84%,#e3e7f2_95%)] pl-[15px]">
    <button type="button" aria-label="展开设计树" className="absolute top-[9px] left-px flex size-3 items-center justify-center">
      <svg viewBox="0 0 5 8" className="h-2 w-[5px]"><path d="M0 0l5 4-5 4z" fill="#111" /></svg>
    </button>
    <div className="absolute top-[357px] left-0 flex h-[38px] w-2 items-center bg-[#f7f7f7]"><Dot /></div>
    <div className="relative flex-1 border-b-2 border-l border-[#1b1c22] bg-white pl-[27px]">
      <div className="size-full border-l border-[#222] bg-[linear-gradient(to_right,#c9b8cb,#bdbcbe_12%,#f6f6f6_28%,#ffffff_34%,#dcdcdc_59%,#cacaca_70%,#c1c1c1_84%,#c0c0c0)]" />
      <SketchCanvas />
      <div className="absolute inset-x-0 top-1 flex h-6 items-center">
        <div className="flex w-[35%] shrink-0 items-center pl-1 text-xs text-black">
          <svg viewBox="0 0 22 20" className="h-5 w-[22px] shrink-0" aria-hidden="true">
            <path d="M9 9l3-2V3l4-2 3 2v5l2 2v5l-5 3-7-2z" fill="#f3cd4b" stroke="#6b5200" />
            <path d="M12 7l4 2 3-1M12 3l4 1 3-1M16 9v9" fill="none" stroke="#6b5200" />
            <rect x="1" y="4" width="8" height="15" rx="2" fill="#2d2d2d" />
            <circle cx="5" cy="8" r="2.200" fill="#d83a2c" />
            <circle cx="5" cy="15" r="2.200" fill="#3a9d48" />
          </svg>
          <span className="ml-[3px] whitespace-pre">零件1   (默认&lt; &lt;默认&gt;_显...</span>
        </div>
        <div className="flex items-center gap-1.5">
          {hud.map((t) => (
            <button key={t.label} type="button" aria-label={t.label} className="flex items-center gap-1.5">
              <Icon>{t.art}</Icon>
              {t.arrow && <Arrow className="mr-0.5 text-[#8a8a8a]" />}
            </button>
          ))}
        </div>
      </div>
      <button type="button" aria-label="退出草图" className="absolute top-8 right-[72px]">
        <svg viewBox="0 0 30 30" className="size-[30px]"><path d="M2 17l4-4 6 5L25 5l4 4-17 18z" fill="#a9c4a4" /></svg>
      </button>
      <button type="button" aria-label="取消草图" className="absolute top-16 right-8">
        <svg viewBox="0 0 26 26" className="size-[26px]" fill="none" stroke="#d39a9b" strokeWidth="7" strokeLinecap="round"><path d="M5 5l16 16M21 5L5 21" /></svg>
      </button>
      <div className="absolute top-[54px] right-0 flex flex-col border-t border-l border-[#8b8b8b]">
        {taskPane.map((t, i) => (
          <button key={t.label} type="button" aria-label={t.label} className={`flex h-6 w-6 items-center justify-center border-b border-[#8b8b8b] ${i === 0 ? 'bg-white' : 'bg-[#e0e0e0]'}`}>
            {t.art}
          </button>
        ))}
      </div>
    </div>
    <div className="-ml-[15px] h-[33px] shrink-0 bg-[linear-gradient(to_bottom,#dde2ef,#e8ebf6)] pt-3.5 pl-3 text-[13px] leading-5 font-bold text-black">*前视</div>
  </section>
)

const candidates = ['仍无法', '恶违法', '而无法', '二维费', '二维']

const ImePopup = () => (
  <div className="absolute top-[239px] left-[67px] w-[447px] border border-[#a9adb2] bg-white">
    <div className="flex h-7 items-center pl-2.5 text-[17px] font-bold text-[#1c69b0] [font-family:'Liberation_Sans',sans-serif]">
      e'w'f<span className="h-[18px] w-px bg-[#c02020]" />
      <svg viewBox="0 0 10 16" className="mt-3 ml-2 h-4 w-2.5" fill="none" stroke="#111"><path d="M2 .500h6M5 0v16M2 15.500h6" /></svg>
    </div>
    <div className="mr-8 ml-px h-px bg-[#d5d8db]" />
    <ol className="flex h-[25px] items-center gap-3.5 pb-1 pl-2.5 text-base leading-6 font-light text-[#1a7d96]">
      {candidates.map((word, i) => (
        <li key={word + i} className={`flex items-center whitespace-nowrap ${i === 0 ? '-mr-1 text-[#b01f24]' : ''}`}>
          <span className="w-4">{i + 1}.</span>{word}
          {i === 0 && (
            <svg viewBox="0 0 12 12" className="mb-1 size-3" fill="none" stroke="#c0343a"><circle cx="6" cy="6" r="5" /><path d="M3 6l2 2 6-6" /></svg>
          )}
        </li>
      ))}
      <li className="flex items-center gap-2">
        <svg viewBox="0 0 8 10" className="h-2.5 w-2" fill="none" stroke="#cfcfcf" strokeWidth="2"><path d="M6 1L2 5l4 4" /></svg>
        <svg viewBox="0 0 8 10" className="h-2.5 w-2" fill="none" stroke="#d0622f" strokeWidth="2"><path d="M2 1l4 4-4 4" /></svg>
        <svg viewBox="0 0 10 8" className="h-2 w-2.5" fill="none" stroke="#d0622f" strokeWidth="2"><path d="M1 2l4 4 4-4" /></svg>
      </li>
    </ol>
    <svg viewBox="0 0 32 32" className="absolute top-0 right-0 size-8" aria-hidden="true">
      <path d="M1 5L26 0l6 3v21l-3 2-21 5q-3 0-4-4z" fill="#eaa48c" />
      <path d="M26 8c-7-3-17-2-17 3 0 6 15 2 15 8 0 5-9 5-17 3" fill="none" stroke="#fff" strokeWidth="4.500" />
    </svg>
  </div>
)

const BottomTabs = () => (
  <footer className="h-[11px] shrink-0 overflow-hidden border-t border-[#9a9ea5]">
    <div className="flex h-3.5 text-[13px] leading-[14px] text-[#222]">
      <div className="ml-[27px] flex w-16 bg-[#a9a9a9]">
        {['M4 4v10M14 4L7 9l7 5z', 'M13 4L6 9l7 5z', 'M6 4l7 5-7 5z', 'M15 4v10M5 4l7 5-7 5z'].map((d) => (
          <button key={d} type="button" aria-label="滚动标签" className="flex flex-1 justify-center border border-[#8b8b8b]">
            <Icon size="size-3" stroke="#888"><path d={d} fill="#999" /></Icon>
          </button>
        ))}
      </div>
      <button type="button" className="w-12 bg-[#f7f7f7] pl-1">模型</button>
      <button type="button" className="w-[59px] border-r border-[#9a9a9a] bg-[#d0d0d0]">3D 视图</button>
      <button type="button" className="w-[84px] border-r border-[#9a9a9a] bg-[#d0d0d0]">运动算例 1</button>
    </div>
  </footer>
)

const desktopRows = [160, 262, 364, 466, 568, 670, 772, 874]

const DesktopEdge = () => (
  <div className="w-1.5 shrink-0 overflow-hidden border-l border-white bg-[#0d3795]">
    <svg viewBox="0 0 5 937" className="h-full w-[5px]" preserveAspectRatio="xMinYMin slice" fontSize="11" fill="#fff">
      <path d="M0 0h5v13H0z" fill="#6e1616" />
      <path d="M0 84h5v14l-5-4zM0 104h5v6H0z" fill="#9bbf35" />
      <text x="-3" y="22">E</text><text x="-1" y="41">a</text><text x="-3" y="122">E</text><text x="-3" y="142">u</text>
      {desktopRows.map((y) => (
        <g key={y}>
          <path d={`M0 ${y + 34}h5v7H0z`} fill="#b3262a" />
          <path d={`M0 ${y + 41}h5v15H0z`} fill={y > 600 ? '#262626' : '#7c2226'} />
          <path d={`M0 ${y + 44}l5 8v3l-5-6z`} fill="#dcdcdc" />
          <text x="-3" y={y + 67}>E</text>
          <text x="-4" y={y + 84}>C</text>
        </g>
      ))}
      <path d="M0 688h5v38H0z" fill="#6d6d6d" />
    </svg>
  </div>
)

const App: React.FC = () => {
  const [activeTab, setActiveTab] = useState('草图')

  return (
    <div className="flex h-screen w-full overflow-hidden bg-[#f7f7f7] [font-family:'Noto_Sans_CJK_SC',sans-serif]">
      <div className="w-1.5 shrink-0 border-r border-[#0b5f98] bg-[linear-gradient(to_bottom,#0a8fdc,#0a9fe3_50%,#07a8e4)]" />
      <div className="flex min-w-0 flex-1 flex-col">
        <TitleBar />
        <MacroBar />
        <Ribbon />
        <CommandTabs active={activeTab} onSelect={setActiveTab} />
        <main className="relative flex min-h-0 flex-1">
          <PropertyPanel />
          <Viewport />
          <ImePopup />
        </main>
        <BottomTabs />
      </div>
      <DesktopEdge />
    </div>
  )
}

export default App
